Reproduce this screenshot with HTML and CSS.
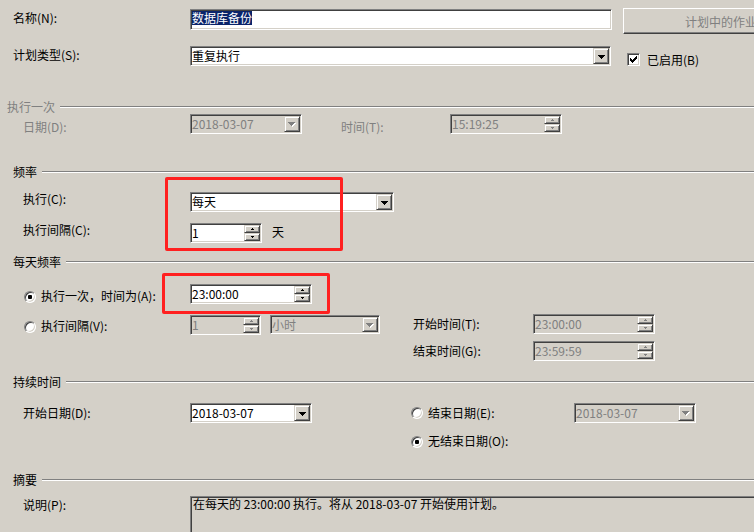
FILE: index.html
```html
<!DOCTYPE html>
<html lang="zh-CN">
<head>
<meta charset="utf-8">
<title>计划属性</title>
<link rel="stylesheet" href="styles.css">
</head>
<body>
<div class="dlg">

  <div class="row r-name">
    <span class="lbl lc13 mt3">名称(N):</span>
    <div class="field f-top w422 h21 mt1"><span class="sel">数据库备份</span></div>
    <div class="btn b-jobs">计划中的作业</div>
  </div>

  <div class="row r-type">
    <span class="lbl lc13 mt2">计划类型(S):</span>
    <div class="field w421 h20">
      <span class="val">重复执行</span>
      <span class="ddb"><svg width="7" height="4" viewBox="0 0 7 4"><path d="M0 0h7v1H0zM1 1h5v1H1zM2 2h3v1H2zM3 3h1v1H3z" fill="#000"/></svg></span>
    </div>
    <div class="chk-wrap">
      <span class="chk"><svg width="7" height="7" viewBox="0 0 7 7"><path d="M6 0h1v1H6zM5 1h2v1H5zM0 2h1v1H0zM4 2h3v1H4zM0 3h2v1H0zM3 3h3v1H3zM0 4h5v1H0zM1 5h3v1H1zM2 6h1v1H2z" fill="#000"/></svg></span>
      <span class="chk-lbl">已启用(B)</span>
    </div>
  </div>

  <div class="grp grp-dis"><span class="grp-t">执行一次</span><span class="grp-l"></span></div>

  <div class="row r-once-date">
    <span class="lbl lc23 mt6 gray">日期(D):</span>
    <div class="field dis w112 h20">
      <span class="val">2018-03-07</span>
      <span class="ddb"><svg width="8" height="5" viewBox="0 0 8 5"><path d="M1 1h7v1H1zM2 2h5v1H2zM3 3h3v1H3zM4 4h1v1H4z" fill="#fff"/><path d="M0 0h7v1H0zM1 1h5v1H1zM2 2h3v1H2zM3 3h1v1H3z" fill="#808080"/></svg></span>
    </div>
    <span class="lbl gray mt6 l-time">时间(T):</span>
    <div class="field dis w112 h20">
      <span class="val">15:19:25</span>
      <span class="spb"><span class="sb"><svg width="3" height="2" viewBox="0 0 3 2"><path d="M1 0h1v1H1zM0 1h3v1H0z" fill="#808080"/></svg></span><span class="sb"><svg width="3" height="2" viewBox="0 0 3 2"><path d="M0 0h3v1H0zM1 1h1v1H1z" fill="#808080"/></svg></span></span>
    </div>
  </div>

  <div class="grp g-gap13"><span class="grp-t">频率</span><span class="grp-l"></span></div>

  <div class="row r-exec">
    <span class="lbl lc23">执行(C):</span>
    <div class="field w204 h20">
      <span class="val">每天</span>
      <span class="ddb"><svg width="7" height="4" viewBox="0 0 7 4"><path d="M0 0h7v1H0zM1 1h5v1H1zM2 2h3v1H2zM3 3h1v1H3z" fill="#000"/></svg></span>
    </div>
  </div>

  <div class="row r-every">
    <span class="lbl lc23">执行间隔(C):</span>
    <div class="field w72 h20">
      <span class="val">1</span>
      <span class="spb"><span class="sb"><svg width="3" height="2" viewBox="0 0 3 2"><path d="M1 0h1v1H1zM0 1h3v1H0z" fill="#000"/></svg></span><span class="sb"><svg width="3" height="2" viewBox="0 0 3 2"><path d="M0 0h3v1H0zM1 1h1v1H1z" fill="#000"/></svg></span></span>
    </div>
    <span class="lbl unit mt2">天</span>
  </div>

  <div class="grp g-gap15"><span class="grp-t">每天频率</span><span class="grp-l"></span></div>

  <div class="row r-at">
    <div class="lead">
      <span class="radio on mt7"></span>
      <span class="lbl rl mt5">执行一次，时间为(A):</span>
    </div>
    <div class="field w122 h20">
      <span class="val">23:00:00</span>
      <span class="spb"><span class="sb"><svg width="3" height="2" viewBox="0 0 3 2"><path d="M1 0h1v1H1zM0 1h3v1H0z" fill="#000"/></svg></span><span class="sb"><svg width="3" height="2" viewBox="0 0 3 2"><path d="M0 0h3v1H0zM1 1h1v1H1z" fill="#000"/></svg></span></span>
    </div>
  </div>

  <div class="row r-interval">
    <div class="lead">
      <span class="radio mt7"></span>
      <span class="lbl rl mt5">执行间隔(V):</span>
    </div>
    <div class="field dis w71 h20 mt1">
      <span class="val">1</span>
      <span class="spb"><span class="sb"><svg width="3" height="2" viewBox="0 0 3 2"><path d="M1 0h1v1H1zM0 1h3v1H0z" fill="#808080"/></svg></span><span class="sb"><svg width="3" height="2" viewBox="0 0 3 2"><path d="M0 0h3v1H0zM1 1h1v1H1z" fill="#808080"/></svg></span></span>
    </div>
    <div class="field dis w110 h19 mt1 ml9">
      <span class="val">小时</span>
      <span class="ddb"><svg width="8" height="5" viewBox="0 0 8 5"><path d="M1 1h7v1H1zM2 2h5v1H2zM3 3h3v1H3zM4 4h1v1H4z" fill="#fff"/><path d="M0 0h7v1H0zM1 1h5v1H1zM2 2h3v1H2zM3 3h1v1H3z" fill="#808080"/></svg></span>
    </div>
    <span class="lbl l-c2 mt3 ml33">开始时间(T):</span>
    <div class="field dis w122 h20">
      <span class="val">23:00:00</span>
      <span class="spb"><span class="sb"><svg width="3" height="2" viewBox="0 0 3 2"><path d="M1 0h1v1H1zM0 1h3v1H0z" fill="#808080"/></svg></span><span class="sb"><svg width="3" height="2" viewBox="0 0 3 2"><path d="M0 0h3v1H0zM1 1h1v1H1z" fill="#808080"/></svg></span></span>
    </div>
  </div>

  <div class="row r-endtime">
    <span class="lbl l-c2 mt3 c2">结束时间(G):</span>
    <div class="field dis w122 h20">
      <span class="val">23:59:59</span>
      <span class="spb"><span class="sb"><svg width="3" height="2" viewBox="0 0 3 2"><path d="M1 0h1v1H1zM0 1h3v1H0z" fill="#808080"/></svg></span><span class="sb"><svg width="3" height="2" viewBox="0 0 3 2"><path d="M0 0h3v1H0zM1 1h1v1H1z" fill="#808080"/></svg></span></span>
    </div>
  </div>

  <div class="grp g-gap14"><span class="grp-t">持续时间</span><span class="grp-l"></span></div>

  <div class="row r-start">
    <span class="lbl lc23 mt3">开始日期(D):</span>
    <div class="field w122 h20">
      <span class="val">2018-03-07</span>
      <span class="ddb"><svg width="7" height="4" viewBox="0 0 7 4"><path d="M0 0h7v1H0zM1 1h5v1H1zM2 2h3v1H2zM3 3h1v1H3z" fill="#000"/></svg></span>
    </div>
    <span class="radio mt4 ml99"></span>
    <span class="lbl l-end mt3">结束日期(E):</span>
    <div class="field dis w122 h20">
      <span class="val">2018-03-07</span>
      <span class="ddb"><svg width="8" height="5" viewBox="0 0 8 5"><path d="M1 1h7v1H1zM2 2h5v1H2zM3 3h3v1H3zM4 4h1v1H4z" fill="#fff"/><path d="M0 0h7v1H0zM1 1h5v1H1zM2 2h3v1H2zM3 3h1v1H3z" fill="#808080"/></svg></span>
    </div>
  </div>

  <div class="row r-noend">
    <span class="radio on mt2 c-radio"></span>
    <span class="lbl rl">无结束日期(O):</span>
  </div>

  <div class="grp g-gap9"><span class="grp-t">摘要</span><span class="grp-l"></span></div>

  <div class="row r-desc">
    <span class="lbl lc23 mt2">说明(P):</span>
    <div class="field dis memo">在每天的 23:00:00 执行。将从 2018-03-07 开始使用计划。</div>
  </div>

  <div class="mark mark-freq"></div>
  <div class="mark mark-time"></div>
</div>
</body>
</html>
```

FILE: styles.css
```css
* { box-sizing: border-box; margin: 0; padding: 0; }
html, body { width: 754px; height: 532px; overflow: hidden; }
body {
  background: #d4d0c8;
  font-family: "Noto Sans CJK SC", "Noto Sans", sans-serif;
  font-size: 12px;
  line-height: 14px;
  color: #000;
}
.dlg { position: relative; width: 754px; height: 532px; padding-top: 8px; }

.row { display: flex; align-items: flex-start; }
.lbl { white-space: nowrap; flex: none; }
.gray { color: #808080; }

.lc13 { padding-left: 13px; width: 190px; }
.lc23 { padding-left: 23px; width: 190px; }

.mt1 { margin-top: 1px; }
.mt2 { margin-top: 2px; }
.mt3 { margin-top: 3px; }
.mt4 { margin-top: 4px; }
.mt5 { margin-top: 5px; }
.mt6 { margin-top: 6px; }
.mt7 { margin-top: 7px; }
.ml9 { margin-left: 9px; }
.ml33 { margin-left: 33px; }
.ml99 { margin-left: 99px; }

/* row heights */
.r-name { height: 38px; }
.r-type { height: 54px; }
.r-once-date { height: 51px; }
.r-exec { height: 31px; }
.r-every { height: 32px; }
.r-at { height: 30px; }
.r-interval { height: 27px; }
.r-endtime { height: 34px; }
.r-start { height: 31px; }
.r-noend { height: 39px; }

/* group headers */
.grp { display: flex; align-items: center; height: 14px; }
.grp-t { padding-left: 13px; padding-right: 5px; white-space: nowrap; }
.grp-dis .grp-t { padding-left: 7px; color: #808080; }
.grp-l { flex: 1; height: 2px; border-top: 1px solid #808080; border-bottom: 1px solid #fff; }
.g-gap13 { margin-bottom: 13px; }
.g-gap15 { margin-bottom: 15px; }
.g-gap14 { margin-bottom: 14px; }
.g-gap9 { margin-bottom: 9px; }

/* sunken fields */
.field {
  display: flex;
  align-items: center;
  flex: none;
  background: #fff;
  border: 1px solid;
  border-color: #808080 #fff #fff #808080;
  box-shadow: inset 1px 1px 0 #404040, inset -1px -1px 0 #d4d0c8;
  padding: 1px;
  white-space: nowrap;
}
.f-top { align-items: flex-start; }
.dis { background: #d4d0c8; color: #808080; }
.val { flex: 1; }
.sel { background: #0a246a; color: #fff; }

.w422 { width: 422px; }
.w421 { width: 421px; }
.w204 { width: 204px; }
.w122 { width: 122px; }
.w112 { width: 112px; }
.w110 { width: 110px; }
.w72 { width: 72px; }
.w71 { width: 71px; }
.h21 { height: 21px; }
.h20 { height: 20px; }
.h19 { height: 19px; }

/* raised parts */
.ddb, .sb {
  display: flex;
  align-items: center;
  justify-content: center;
  background: #d4d0c8;
  border: 1px solid;
  border-color: #d4d0c8 #404040 #404040 #d4d0c8;
  box-shadow: inset 1px 1px 0 #fff, inset -1px -1px 0 #808080;
}
.ddb { width: 16px; align-self: stretch; flex: none; }
.ddb svg { margin-top: 1px; }
.spb { display: flex; flex-direction: column; width: 16px; align-self: stretch; flex: none; }
.sb { flex: 1; }

.btn {
  display: flex;
  align-items: center;
  justify-content: center;
  flex: none;
  background: #d4d0c8;
  border: 1px solid;
  border-color: #fff #404040 #404040 #fff;
  box-shadow: inset -1px -1px 0 #808080;
  color: #808080;
  white-space: nowrap;
}
.b-jobs { width: 196px; height: 26px; margin-left: 11px; padding-top: 1px; }

/* checkbox */
.chk-wrap { display: flex; align-items: flex-start; margin-left: 16px; margin-top: 7px; }
.chk {
  display: flex;
  align-items: center;
  justify-content: center;
  width: 13px;
  height: 13px;
  background: #fff;
  border: 1px solid;
  border-color: #808080 #fff #fff #808080;
  box-shadow: inset 1px 1px 0 #404040, inset -1px -1px 0 #d4d0c8;
}
.chk-lbl { margin-left: 7px; white-space: nowrap; }

/* radios */
.radio {
  position: relative;
  flex: none;
  width: 12px;
  height: 12px;
  border-radius: 50%;
  background: #fff;
  border: 1px solid;
  border-color: #808080 #fff #fff #808080;
  box-shadow: inset 1px 1px 0 #404040, inset -1px -1px 0 #d4d0c8;
}
.radio.on::after {
  content: "";
  position: absolute;
  left: 3px;
  top: 3px;
  width: 4px;
  height: 4px;
  border-radius: 1px;
  background: #000;
}
.rl { margin-left: 5px; }
.lead { display: flex; align-items: flex-start; width: 190px; padding-left: 24px; flex: none; }
.c-radio { margin-left: 411px; }

/* misc labels */
.l-time { width: 109px; margin-left: 39px; }
.unit { margin-left: 10px; }
.l-c2 { width: 120px; }
.c2 { margin-left: 413px; }
.l-end { width: 146px; margin-left: 5px; }

/* memo */
.memo {
  width: 600px;
  height: 60px;
  align-items: flex-start;
  line-height: 12px;
  padding: 1px 1px 1px 2px;
  color: #000;
}

/* annotation rectangles */
.mark {
  position: absolute;
  border: 3px solid #ff2020;
  border-radius: 2px;
}
.mark-freq { left: 165px; top: 177px; width: 178px; height: 74px; }
.mark-time { left: 162px; top: 273px; width: 168px; height: 41px; }
```
